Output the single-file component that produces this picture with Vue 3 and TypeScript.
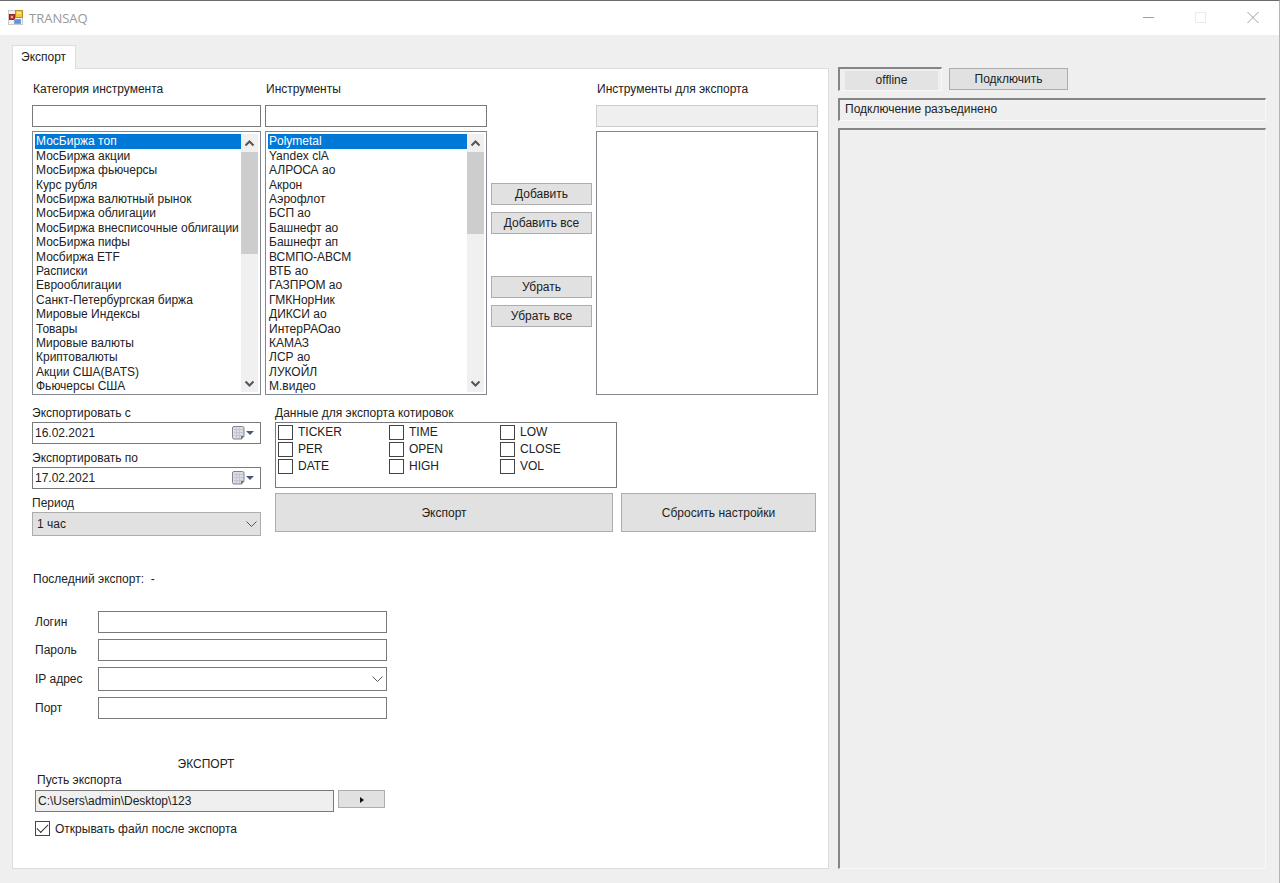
<script setup lang="ts">
import { ref } from 'vue'

const categories: string[] = [
  'МосБиржа топ', 'МосБиржа акции', 'МосБиржа фьючерсы', 'Курс рубля', 'МосБиржа валютный рынок',
  'МосБиржа облигации', 'МосБиржа внесписочные облигации', 'МосБиржа пифы', 'Мосбиржа ETF', 'Расписки',
  'Еврооблигации', 'Санкт-Петербургская биржа', 'Мировые Индексы', 'Товары', 'Мировые валюты',
  'Криптовалюты', 'Акции США(BATS)', 'Фьючерсы США',
]
const instruments: string[] = [
  'Polymetal', 'Yandex clA', 'АЛРОСА ао', 'Акрон', 'Аэрофлот', 'БСП ао', 'Башнефт ао', 'Башнефт ап',
  'ВСМПО-АВСМ', 'ВТБ ао', 'ГАЗПРОМ ао', 'ГМКНорНик', 'ДИКСИ ао', 'ИнтерРАОао', 'КАМАЗ', 'ЛСР ао',
  'ЛУКОЙЛ', 'М.видео',
]
const fields: string[] = ['TICKER', 'PER', 'DATE', 'TIME', 'OPEN', 'HIGH', 'LOW', 'CLOSE', 'VOL']

const category = ref('МосБиржа топ')
const instrument = ref('Polymetal')
const categoryFilter = ref('')
const instrumentFilter = ref('')
const chosenFields = ref<string[]>([])
const dates = ref([
  { id: 'date-from', label: 'Экспортировать с', value: '16.02.2021' },
  { id: 'date-to', label: 'Экспортировать по', value: '17.02.2021' },
])
const period = ref('1 час')
const login = ref('')
const password = ref('')
const ip = ref('')
const port = ref('')
const path = ref('C:\\Users\\admin\\Desktop\\123')
const openAfter = ref(true)
</script>

<template>
  <div class="window">
    <header class="titlebar">
      <svg class="logo" width="17" height="17" viewBox="0 0 17 17" aria-hidden="true">
        <rect x="0.500" y="1.500" width="14" height="14" fill="#f3f3f5" stroke="#c9c9cf" />
        <rect x="7.500" y="1.500" width="7" height="7" fill="#f4c63b" stroke="#b98f1d" />
        <rect x="9" y="3" width="4" height="2" fill="#fbe28a" />
        <rect x="1.500" y="5.500" width="5" height="5" fill="#c63a2c" stroke="#92231b" />
        <rect x="3" y="7" width="2" height="2" fill="#f0a59b" />
        <rect x="6.500" y="10.500" width="6" height="4" fill="#5d93e2" stroke="#7fa4d8" />
      </svg>
      <h1 class="title">TRANSAQ</h1>
      <div class="controls">
        <button type="button" aria-label="Свернуть">
          <svg width="14" height="14" viewBox="0 0 14 14"><path d="M1 6.500H12" stroke="#a0a0a0" /></svg>
        </button>
        <button type="button" aria-label="Развернуть" disabled>
          <svg width="14" height="14" viewBox="0 0 14 14"><rect x="1.500" y="1.500" width="10" height="10" fill="none" stroke="#ebebeb" /></svg>
        </button>
        <button type="button" aria-label="Закрыть">
          <svg width="14" height="14" viewBox="0 0 14 14"><path d="M1.500 1L12.500 12M12.500 1L1.500 12" stroke="#a0a0a0" /></svg>
        </button>
      </div>
    </header>

    <main class="body">
      <section class="tabs">
        <button type="button" class="tab">Экспорт</button>
        <div class="panel">
          <div class="lists">
            <div class="column">
              <label for="category-filter">Категория инструмента</label>
              <input id="category-filter" v-model="categoryFilter" class="field" type="text" />
              <div class="listbox">
                <select v-model="category" size="18" aria-label="Категория инструмента">
                  <option v-for="item in categories" :key="item" :value="item">{{ item }}</option>
                </select>
                <div class="scroll" aria-hidden="true">
                  <svg width="17" height="18" viewBox="0 0 17 18"><path d="M4.500 11.500L8.500 7.500L12.500 11.500" /></svg>
                  <div class="track"><div class="thumb"></div></div>
                  <svg width="17" height="18" viewBox="0 0 17 18"><path d="M4.500 7.500L8.500 11.500L12.500 7.500" /></svg>
                </div>
              </div>
            </div>
            <div class="column">
              <label for="instrument-filter">Инструменты</label>
              <input id="instrument-filter" v-model="instrumentFilter" class="field" type="text" />
              <div class="listbox">
                <select v-model="instrument" size="18" aria-label="Инструменты">
                  <option v-for="item in instruments" :key="item" :value="item">{{ item }}</option>
                </select>
                <div class="scroll" aria-hidden="true">
                  <svg width="17" height="18" viewBox="0 0 17 18"><path d="M4.500 11.500L8.500 7.500L12.500 11.500" /></svg>
                  <div class="track"><div class="thumb short"></div></div>
                  <svg width="17" height="18" viewBox="0 0 17 18"><path d="M4.500 7.500L8.500 11.500L12.500 7.500" /></svg>
                </div>
              </div>
            </div>
            <div class="moves">
              <div class="pair">
                <button type="button" class="btn">Добавить</button>
                <button type="button" class="btn">Добавить все</button>
              </div>
              <div class="pair">
                <button type="button" class="btn">Убрать</button>
                <button type="button" class="btn">Убрать все</button>
              </div>
            </div>
            <div class="column">
              <label for="export-filter">Инструменты для экспорта</label>
              <input id="export-filter" class="field" type="text" disabled />
              <div class="listbox">
                <select size="18" aria-label="Инструменты для экспорта"></select>
              </div>
            </div>
          </div>

          <div class="settings">
            <div class="dates">
              <template v-for="d in dates" :key="d.id">
                <label :for="d.id">{{ d.label }}</label>
                <div class="datebox">
                  <input :id="d.id" v-model="d.value" type="text" />
                  <button type="button" aria-label="Открыть календарь">
                    <svg width="26" height="16" viewBox="0 0 26 16">
                      <path d="M1.500 3Q1.500 1.500 3 1.500H11.500Q13 1.500 13 3V11L10.500 14H3Q1.500 14 1.500 12.500Z" fill="#dcdde4" stroke="#83848c" />
                      <path d="M3 4.500H12M3 7.500H12M3 10.500H12M5.500 3V13M8.500 3V13" stroke="#c3c4ce" />
                      <path d="M10 14.500L13.500 11H10Z" fill="#73747d" />
                      <path d="M15 6H23L19 10Z" fill="#4a587c" />
                    </svg>
                  </button>
                </div>
              </template>
              <label for="period">Период</label>
              <div class="combo grey">
                <select id="period" v-model="period"><option>1 час</option></select>
                <svg width="18" height="12" viewBox="0 0 18 12" aria-hidden="true"><path d="M3.500 3.500L8.500 8.500L13.500 3.500" /></svg>
              </div>
            </div>

            <div class="export">
              <span id="fields-label" class="caption">Данные для экспорта котировок</span>
              <div class="checks" role="group" aria-labelledby="fields-label">
                <label v-for="f in fields" :key="f" class="check">
                  <input v-model="chosenFields" type="checkbox" :value="f" />{{ f }}
                </label>
              </div>
              <div class="actions">
                <button type="button" class="btn">Экспорт</button>
                <button type="button" class="btn">Сбросить настройки</button>
              </div>
            </div>
          </div>

          <p class="last">Последний экспорт:&nbsp; -</p>

          <form class="login" @submit.prevent>
            <label for="login">Логин</label>
            <input id="login" v-model="login" class="field" type="text" />
            <label for="password">Пароль</label>
            <input id="password" v-model="password" class="field" type="password" />
            <label for="ip">IP адрес</label>
            <div class="combo">
              <select id="ip" v-model="ip"><option value=""></option></select>
              <svg width="18" height="12" viewBox="0 0 18 12" aria-hidden="true"><path d="M3.500 3.500L8.500 8.500L13.500 3.500" /></svg>
            </div>
            <label for="port">Порт</label>
            <input id="port" v-model="port" class="field" type="text" />
          </form>

          <div class="target">
            <h2>ЭКСПОРТ</h2>
            <label for="path" class="path-label">Пусть экспорта</label>
            <div class="path">
              <input id="path" v-model="path" class="field grey" type="text" readonly />
              <button type="button" class="btn browse" aria-label="Выбрать папку">
                <svg width="6" height="8" viewBox="0 0 6 8"><path d="M1 2L5 5L1 8Z" fill="#111" /></svg>
              </button>
            </div>
            <label class="check open"><input v-model="openAfter" type="checkbox" />Открывать файл после экспорта</label>
          </div>
        </div>
      </section>

      <aside class="side">
        <div class="connect">
          <div class="sunken state"><span>offline</span></div>
          <button type="button" class="btn">Подключить</button>
        </div>
        <div class="sunken status">Подключение разъединено</div>
        <div class="sunken log"></div>
      </aside>
    </main>
  </div>
</template>

<style>
body {
  margin: 0;
  background: #efefef;
}
</style>

<style scoped>
.window,
.window * {
  box-sizing: border-box;
}
.window {
  display: flex;
  flex-direction: column;
  min-height: 100vh;
  border-top: 1px solid #6b6b6b;
  border-right: 1px solid #b4b4b4;
  background: #efefef;
  color: #222;
  font: 12px/16px "Liberation Sans", Arial, sans-serif;
}
button,
input,
select {
  margin: 0;
  border-radius: 0;
  font: inherit;
  color: inherit;
}
.titlebar {
  display: flex;
  align-items: center;
  height: 34px;
  padding-left: 8px;
  background: #fff;
}
.logo {
  margin-bottom: 2px;
}
.title {
  margin: 0 0 0 4px;
  flex: 1;
  font: 13px/18px "Open Sans", "Noto Sans", sans-serif;
  color: #999;
}
.controls {
  display: flex;
}
.controls button {
  display: grid;
  place-items: center;
  width: 52px;
  height: 32px;
  padding: 0;
  border: 0;
  background: none;
}
.body {
  display: grid;
  flex: 1;
  grid-template-columns: 817fr 428fr;
  gap: 9px;
  padding: 10px 13px 14px 12px;
}
.tabs {
  display: flex;
  flex-direction: column;
  align-items: flex-start;
}
.tab {
  height: 24px;
  padding: 0 9px 2px 8px;
  margin-bottom: -1px;
  border: 1px solid #dcdcdc;
  border-bottom: 0;
  background: #fff;
  z-index: 1;
}
.panel {
  flex: 1;
  width: 100%;
  padding: 11px 10px 16px 19px;
  border: 1px solid #dcdcdc;
  background: #fff;
}
.lists {
  display: grid;
  grid-template-columns: 229fr 222fr 101fr 222fr;
  gap: 4px;
}
.column {
  display: flex;
  flex-direction: column;
  gap: 4px;
  min-width: 0;
}
.column label {
  height: 21px;
  padding-left: 1px;
  line-height: 18px;
}
.field {
  width: 100%;
  height: 22px;
  padding: 0 2px;
  border: 1px solid #7a7a7a;
  background: #fff;
}
.field:disabled {
  border-color: #ccc;
  background: #efefef;
}
.listbox {
  display: flex;
  height: 264px;
  padding: 2px;
  border: 1px solid #828790;
  background: #fff;
}
.listbox select {
  flex: 1;
  min-width: 0;
  height: 260px;
  padding: 0;
  border: 0;
  outline: 0;
  overflow: hidden;
  background: #fff;
}
.listbox option {
  height: 14px;
  min-height: 0;
  padding: 0 0 0 1px;
  line-height: 14px;
  color: #222;
}
.listbox option:nth-child(5n + 1),
.listbox option:nth-child(5n + 3) {
  height: 15px;
}
.listbox option:checked {
  background: linear-gradient(#0078d7, #0078d7);
  -webkit-text-fill-color: #fff;
}
.scroll {
  display: flex;
  flex-direction: column;
  width: 17px;
  background: #f0f0f0;
}
.scroll path {
  fill: none;
  stroke: #555;
  stroke-width: 2;
}
.track {
  flex: 1;
}
.thumb {
  height: 46%;
  background: #cdcdcd;
}
.thumb.short {
  height: 37%;
}
.moves {
  display: flex;
  flex-direction: column;
  gap: 42px;
  padding-top: 103px;
}
.pair {
  display: grid;
  gap: 7px;
}
.btn {
  height: 22px;
  padding: 0;
  border: 1px solid #adadad;
  background: #e1e1e1;
  white-space: nowrap;
}
.settings {
  display: grid;
  grid-template-columns: 229fr 543fr;
  gap: 14px;
  padding-top: 10px;
}
.dates {
  display: flex;
  flex-direction: column;
}
.dates label,
.caption {
  display: block;
  height: 17px;
}
.datebox {
  display: flex;
  height: 22px;
  margin-bottom: 6px;
  border: 1px solid #7a7a7a;
}
.datebox input {
  flex: 1;
  min-width: 0;
  padding: 0 2px;
  border: 0;
  background: none;
}
.datebox button {
  display: grid;
  place-items: center;
  width: 32px;
  padding: 0;
  border: 0;
  background: none;
}
.combo {
  display: grid;
  grid-template-columns: 1fr 18px;
  align-items: center;
  height: 24px;
}
.combo select {
  grid-area: 1 / 1 / 2 / 3;
  width: 100%;
  height: 100%;
  padding: 0 4px;
  border: 1px solid #7a7a7a;
  background: #fff;
  appearance: none;
}
.combo.grey select {
  border-color: #adadad;
  background: #e1e1e1;
}
.combo svg {
  grid-area: 1 / 2;
  pointer-events: none;
}
.combo path {
  fill: none;
  stroke: #555;
}
.checks {
  display: grid;
  grid-template-columns: repeat(3, 111px);
  grid-template-rows: repeat(3, 17px);
  grid-auto-flow: column;
  width: 63%;
  height: 66px;
  padding: 2px;
  border: 1px solid #7a7a7a;
  line-height: 14px;
}
.check {
  display: flex;
  align-items: flex-start;
  gap: 5px;
}
.check input {
  display: grid;
  place-items: center;
  width: 15px;
  height: 15px;
  border: 1px solid #444;
  background: #fff;
  appearance: none;
}
.check input:checked::after {
  content: "";
  width: 10px;
  height: 5px;
  margin-top: -3px;
  border: solid #333;
  border-width: 0 0 1px 1px;
  transform: rotate(-45deg);
}
.actions {
  display: grid;
  grid-template-columns: 338fr 195fr;
  gap: 8px;
  padding: 5px 2px 0 0;
}
.actions .btn {
  height: 39px;
}
.last {
  margin: 35px 0 0 1px;
}
.login {
  display: grid;
  grid-template-columns: 63px 289px;
  align-items: center;
  row-gap: 6px;
  margin: 24px 0 0 3px;
}
.target {
  width: 350px;
  margin: 37px 0 0 3px;
}
.target h2 {
  margin: 0;
  font: inherit;
  text-align: center;
  padding-right: 8px;
}
.path-label {
  display: block;
  padding-left: 2px;
  height: 18px;
}
.path {
  display: grid;
  grid-template-columns: 299fr 47fr;
  gap: 4px;
}
.field.grey {
  background: #efefef;
}
.browse {
  display: grid;
  place-items: center;
  height: 18px;
}
.check.open {
  margin-top: 9px;
}
.side {
  display: flex;
  flex-direction: column;
  gap: 7px;
  padding-top: 22px;
}
.sunken {
  border: solid;
  border-width: 2px 1px 1px 2px;
  border-color: #858585 #f8f8f8 #f8f8f8 #858585;
}
.connect {
  display: flex;
  align-items: center;
  gap: 7px;
}
.state {
  width: 104px;
  height: 24px;
  padding: 2px 3px 0 5px;
}
.state span {
  display: block;
  height: 19px;
  line-height: 19px;
  background: #e3e3e3;
  text-align: center;
}
.connect .btn {
  width: 119px;
}
.status {
  height: 23px;
  padding-left: 5px;
  line-height: 18px;
}
.log {
  flex: 1;
}
</style>
